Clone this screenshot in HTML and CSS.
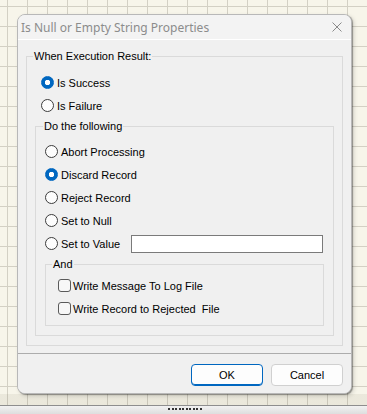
FILE: index.html
```html
<!DOCTYPE html>
<html lang="en">
<head>
    <meta charset="UTF-8">
    <title>Is Null or Empty String Properties</title>
    <link rel="stylesheet" href="styles.css">
</head>
<body>
    <div class="stage">
        <div class="dialog">
            <div class="titlebar">
                <span class="title">Is Null or Empty String Properties</span>
                <svg class="close" width="10" height="10" viewBox="0 0 10 10">
                    <path d="M0.5 0.5 L9.5 9.5 M9.5 0.5 L0.5 9.5" stroke="#8a8a8a" stroke-width="1" fill="none"/>
                </svg>
            </div>

            <div class="content">
                <!-- Execution result -->
                <fieldset class="group outer">
                    <legend>When Execution Result:</legend>
                    <label class="opt top-opt"><input type="radio" name="result" checked> Is Success</label>
                    <label class="opt top-opt"><input type="radio" name="result"> Is Failure</label>

                    <!-- Actions -->
                    <fieldset class="group inner">
                        <legend>Do the following</legend>
                        <label class="opt"><input type="radio" name="action"> Abort Processing</label>
                        <label class="opt"><input type="radio" name="action" checked> Discard Record</label>
                        <label class="opt"><input type="radio" name="action"> Reject Record</label>
                        <label class="opt"><input type="radio" name="action"> Set to Null</label>
                        <div class="opt">
                            <label class="opt-label"><input type="radio" name="action"> Set to Value</label>
                            <input type="text" class="value-box">
                        </div>

                        <fieldset class="group and">
                            <legend>And</legend>
                            <label class="opt check"><input type="checkbox"> Write Message To Log File</label>
                            <label class="opt check"><input type="checkbox"> Write Record to Rejected&nbsp; File</label>
                        </fieldset>
                    </fieldset>
                </fieldset>
            </div>

            <div class="footer">
                <button class="btn btn-default">OK</button>
                <button class="btn">Cancel</button>
            </div>
        </div>
    </div>

    <div class="splitter">
        <div class="grip"></div>
    </div>
</body>
</html>
```

FILE: styles.css
```css
* {
    box-sizing: border-box;
}

html, body {
    margin: 0;
    padding: 0;
}

body {
    width: 367px;
    height: 414px;
    overflow: hidden;
    font-family: "Liberation Sans", Arial, sans-serif;
    font-size: 11px;
    color: #000;
    background: #e9e9e9;
}

.stage {
    height: 405px;
    padding: 14px 0 0 17px;
    background:
        linear-gradient(to bottom, transparent 394px, rgba(90, 80, 50, 0.08) 394px),
        linear-gradient(#d3d0c4 1px, transparent 1px) 0 6px / 20px 20px,
        linear-gradient(90deg, #d3d0c4 1px, transparent 1px) 7px 0 / 20px 20px,
        #f7f5ea;
}

.dialog {
    width: 335px;
    height: 380px;
    display: flex;
    flex-direction: column;
    background: #f0f0f0;
    border: 1px solid #b8b8b8;
    border-radius: 8px;
    overflow: hidden;
    box-shadow: 1px 1px 1px rgba(0, 0, 0, 0.35), 2px 2px 4px rgba(0, 0, 0, 0.15);
}

.titlebar {
    height: 25px;
    display: flex;
    align-items: center;
    justify-content: space-between;
    padding: 0 9px 0 3px;
    background: #f3f3f3;
    border-bottom: 1px solid #ffffff;
}

.title {
    font-family: "Noto Sans", "Open Sans", sans-serif;
    font-size: 12px;
    color: #8c8c8c;
}

.content {
    flex: 1;
    padding: 10px 8px 6px 8px;
}

/* group boxes */
.group {
    margin: 0;
    border: 1px solid #dadada;
    min-width: 0;
}

.group legend {
    padding: 0 1px;
    line-height: 13px;
    font-size: 11px;
}

.outer {
    padding: 8px 8px 9px 6px;
}

.inner {
    margin: 3px 0 0 2px;
    padding: 7px 9px 9px 7px;
}

.and {
    margin: 3px 0 0 2px;
    padding: 3px 9px 5px 6px;
}

/* option rows */
.opt {
    height: 23px;
    display: flex;
    align-items: center;
    padding-left: 2px;
    white-space: nowrap;
}

.top-opt {
    padding-left: 8px;
}

.check {
    padding-left: 6px;
}

.opt-label {
    display: flex;
    align-items: center;
}

input[type="radio"],
input[type="checkbox"] {
    appearance: none;
    -webkit-appearance: none;
    margin: 0 3px 0 0;
    width: 13px;
    height: 13px;
    background: #fdfdfd;
    border: 1px solid #3c3c3c;
    flex: none;
}

input[type="radio"] {
    border-radius: 50%;
}

input[type="radio"]:checked {
    border-color: #0067c0;
    background: radial-gradient(circle, #fff 0 2.4px, #0067c0 3px);
}

input[type="checkbox"] {
    margin-right: 2px;
    border-radius: 3px;
    border-color: #5a5a5a;
    background: #f7f7f7;
}

.value-box {
    margin: 0 1px 0 auto;
    width: 192px;
    height: 18px;
    border: 1px solid #7a7a7a;
    background: #fff;
    padding: 0 3px;
    font: inherit;
    outline: none;
}

/* footer */
.footer {
    height: 40px;
    display: flex;
    justify-content: flex-end;
    align-items: flex-start;
    gap: 8px;
    padding: 10px 8px 0 0;
    border-top: 1px solid #acacac;
    background: #f0f0f0;
}

.btn {
    width: 72px;
    height: 22px;
    font-family: "Liberation Sans", Arial, sans-serif;
    font-size: 11px;
    color: #000;
    background: #fdfdfd;
    border: 1px solid #d0d0d0;
    border-radius: 4px;
    padding: 0;
}

.btn-default {
    border-color: #0067c0;
    box-shadow: inset 0 -1px 0 #0067c0;
}

/* bottom splitter */
.splitter {
    height: 9px;
    border-top: 1px solid #8e8e8e;
    background: linear-gradient(#f2f2f2, #dedede);
    padding: 2px 0 0 168px;
}

.grip {
    width: 35px;
    height: 2px;
    background: repeating-linear-gradient(90deg, #333 0 2px, transparent 2px 3.5px);
}
```
